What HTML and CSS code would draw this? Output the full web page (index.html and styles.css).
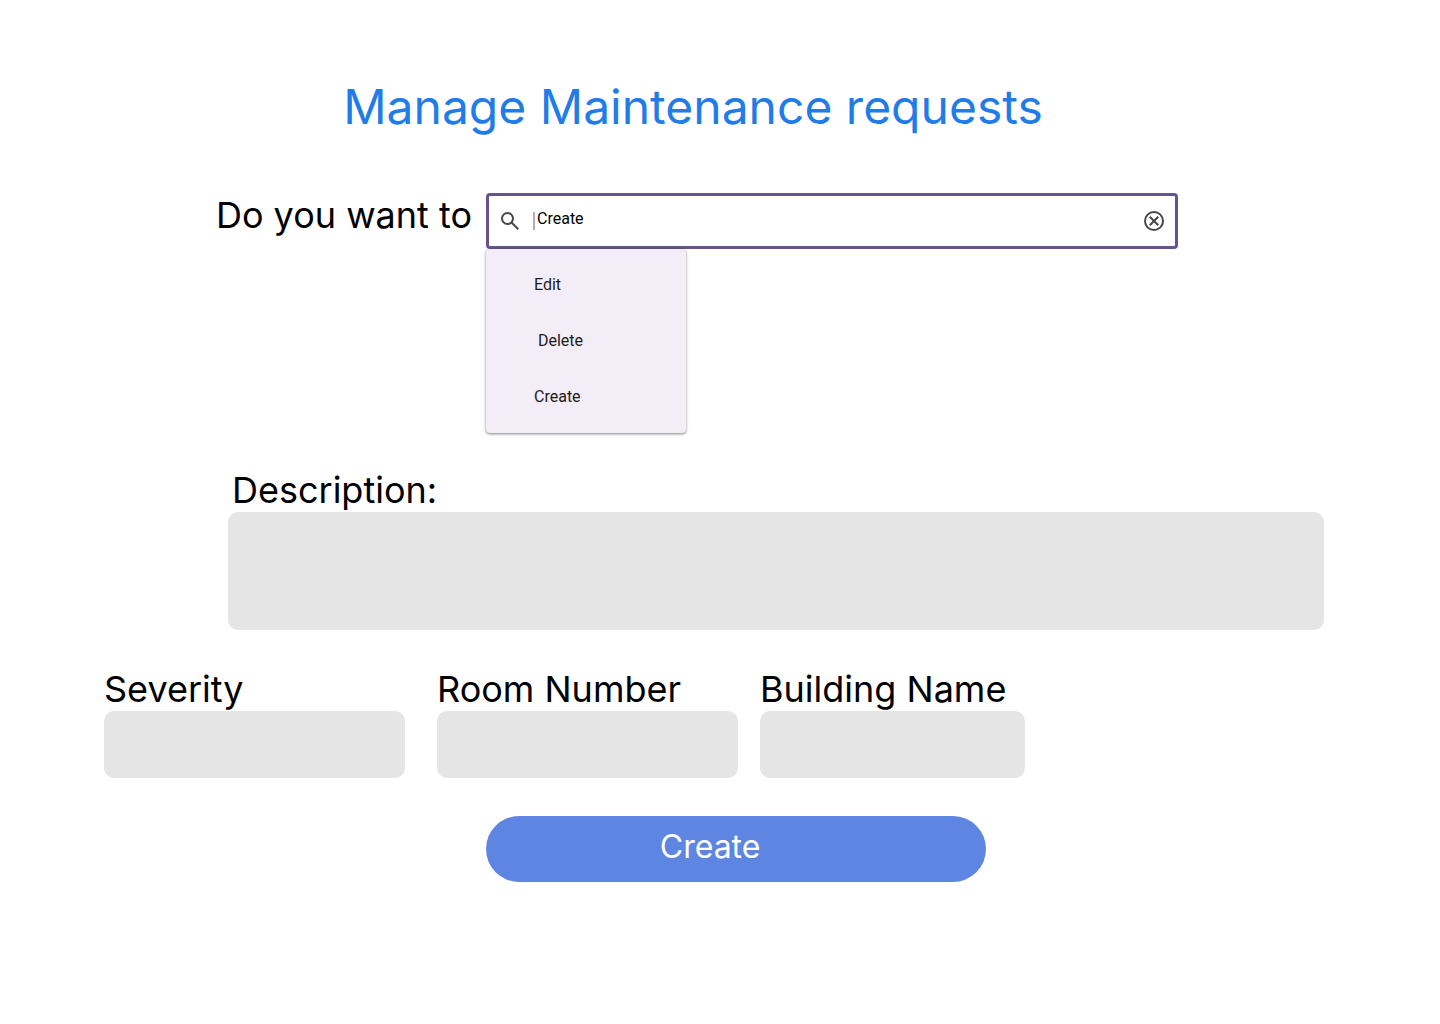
FILE: index.html
```html
<!DOCTYPE html>
<html lang="en">
<head>
<meta charset="utf-8">
<meta name="viewport" content="width=device-width, initial-scale=1">
<title>Manage Maintenance requests</title>
<link rel="stylesheet" href="styles.css">
</head>
<body>
<main class="page">
  <h1 class="title">Manage Maintenance requests</h1>
  <form class="form">
    <div class="action-row">
      <label class="label label-end" for="action">Do you want to</label>
      <div class="combo">
        <div class="search">
          <svg class="icon" viewBox="0 0 24 24" aria-hidden="true"><path d="M19.6 21l-6.3-6.3A6.1 6.1 0 0 1 9.5 16 6.5 6.5 0 1 1 16 9.5a6.1 6.1 0 0 1-1.3 3.8l6.3 6.3zM9.5 14A4.5 4.5 0 1 0 5 9.5 4.5 4.5 0 0 0 9.5 14z"/></svg>
          <span class="caret"></span>
          <input class="search-input" id="action" type="text" value="Create" autocomplete="off">
          <button class="clear" type="button" aria-label="Clear">
            <svg class="icon" viewBox="0 0 24 24" aria-hidden="true"><path d="M8.4 17l3.6-3.6 3.6 3.6 1.4-1.4-3.6-3.6 3.6-3.6L15.6 7 12 10.6 8.4 7 7 8.4l3.6 3.6L7 15.6zM12 22a10 10 0 1 1 0-20 10 10 0 0 1 0 20zm0-2a8 8 0 1 0 0-16 8 8 0 0 0 0 16z"/></svg>
          </button>
        </div>
        <div class="menu">
          <button class="menu-item" type="button">Edit</button>
          <button class="menu-item" type="button">&nbsp;Delete</button>
          <button class="menu-item" type="button">Create</button>
        </div>
      </div>
    </div>
    <div class="description">
      <label class="label label-inset" for="description">Description:</label>
      <textarea class="box box-tall" id="description"></textarea>
    </div>
    <div class="details">
      <div class="field field-first">
        <label class="label" for="severity">Severity</label>
        <input class="box" id="severity" type="text">
      </div>
      <div class="field">
        <label class="label" for="room">Room Number</label>
        <input class="box" id="room" type="text">
      </div>
      <div class="field">
        <label class="label" for="building">Building Name</label>
        <input class="box" id="building" type="text">
      </div>
    </div>
    <button class="submit" type="submit">Create</button>
  </form>
</main>
</body>
</html>
```
FILE: styles.css
```css
* {
  box-sizing: border-box;
}

body {
  margin: 0;
  background: #fff;
  color: #000;
  font-family: Inter, sans-serif;
}

button,
input,
textarea {
  margin: 0;
  padding: 0;
  border: 0;
  outline: 0;
  font: inherit;
  color: inherit;
}

.page {
  padding: 78px 116px 78px 104px;
}

.title {
  margin: 0 0 57px;
  padding-right: 42px;
  color: #1f7ce8;
  font-size: 48px;
  font-weight: 400;
  line-height: 58px;
  text-align: center;
}

.label {
  display: block;
  font-size: 36px;
  line-height: 44px;
  white-space: nowrap;
}

.label-inset {
  padding-left: 4px;
}

.label-end {
  text-align: right;
}

.action-row {
  display: grid;
  grid-template-columns: 368px 1fr;
  column-gap: 14px;
  padding-right: 146px;
}

.combo {
  position: relative;
}

.search {
  display: flex;
  align-items: center;
  height: 56px;
  padding: 0 9px;
  border: 3px solid #65558f;
  border-radius: 4px;
}

.icon {
  display: block;
  flex: none;
  width: 24px;
  height: 24px;
  fill: #49454f;
}

.caret {
  width: 2px;
  height: 18px;
  margin: 0 2px 0 11px;
  background: #b2aac7;
}

.search-input {
  flex: 1;
  min-width: 0;
  height: 24px;
  padding-bottom: 6px;
  background: none;
  font-family: Roboto, sans-serif;
  font-size: 16px;
}

.clear {
  background: none;
}

.menu {
  position: absolute;
  top: 100%;
  left: 0;
  width: 200px;
  padding: 8px 0;
  border-radius: 4px;
  background: #f3edf7;
  box-shadow: 0 1px 2px rgba(0, 0, 0, 0.3), 0 1px 3px 1px rgba(0, 0, 0, 0.15);
}

.menu-item {
  display: block;
  width: 100%;
  height: 56px;
  padding: 0 0 2px 48px;
  background: none;
  color: #1d1b20;
  font-family: Roboto, sans-serif;
  font-size: 16px;
  text-align: left;
}

.description {
  margin-top: 219px;
  padding-left: 124px;
}

.box {
  display: block;
  width: 100%;
  height: 67px;
  padding: 12px;
  border-radius: 10px;
  background: #e5e5e5;
  font-size: 20px;
}

.box-tall {
  height: 118px;
  resize: none;
}

.details {
  display: grid;
  grid-template-columns: 311fr 301fr 265fr;
  column-gap: 22px;
  margin-top: 37px;
  padding-right: 299px;
}

.field-first {
  padding-right: 10px;
}

.submit {
  display: block;
  width: 41%;
  height: 66px;
  margin: 38px 0 0 382px;
  padding: 0 52px 6px 0;
  border-radius: 33px;
  background: #5e85e1;
  color: #fff;
  font-size: 32px;
}
```
